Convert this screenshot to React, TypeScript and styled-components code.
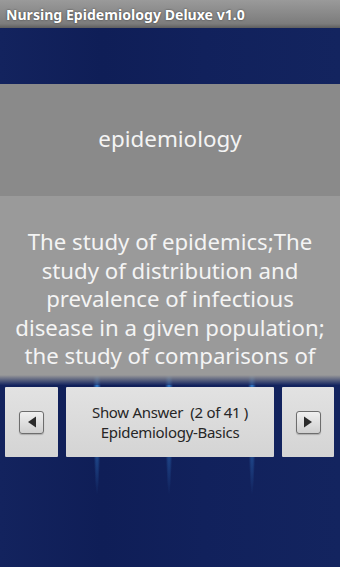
import React from "react";
import styled, { createGlobalStyle } from "styled-components";

const Global = createGlobalStyle`
  html, body { margin: 0; padding: 0; background: #11205a; }
  #root { width: 340px; height: 567px; }
`;

const Screen = styled.div`
  width: 340px;
  height: 567px;
  overflow: hidden;
  display: flex;
  flex-direction: column;
  font-family: "Noto Sans", "Open Sans", sans-serif;
  background:
    radial-gradient(ellipse 4px 100px at 97px 395px, rgba(60, 150, 235, 0.85), rgba(60, 150, 235, 0) 100%),
    radial-gradient(ellipse 4px 100px at 169px 395px, rgba(60, 150, 235, 0.8), rgba(60, 150, 235, 0) 100%),
    radial-gradient(ellipse 4px 100px at 252px 395px, rgba(60, 150, 235, 0.8), rgba(60, 150, 235, 0) 100%),
    linear-gradient(90deg, #13235e 0%, #0f1e57 30%, #11215c 60%, #13245f 100%);
`;

const TitleBar = styled.div`
  height: 28px;
  flex: none;
  box-sizing: border-box;
  padding: 0 6px;
  display: flex;
  align-items: center;
  background: linear-gradient(#9a9a9a, #7c7c7c 85%, #5e5e5e);
  color: #fff;
  font-weight: 700;
  font-size: 14.1px;
  text-shadow: 0 0 2px rgba(0, 0, 0, 0.6);
  white-space: nowrap;
`;

const Spacer = styled.div<{ $h: number }>`
  height: ${(p) => p.$h}px;
  flex: none;
`;

const TermPanel = styled.div`
  height: 112px;
  flex: none;
  background: #8a8a8a;
  display: flex;
  align-items: center;
  justify-content: center;
  color: #f4f4f4;
  font-size: 22.4px;
  padding-bottom: 4px;
  box-sizing: border-box;
`;

const DefinitionPanel = styled.div`
  height: 179px;
  flex: none;
  overflow: hidden;
  box-sizing: border-box;
  padding: 32px 6px 0;
  background: #9a9a9a;
  color: #f4f4f4;
  font-size: 22.2px;
  line-height: 28.6px;
  text-align: center;
`;

const PanelFade = styled.div`
  height: 10px;
  flex: none;
  background: linear-gradient(#9a9a9a, rgba(26, 42, 100, 0.6));
`;

const ButtonRow = styled.div`
  height: 70px;
  flex: none;
  display: flex;
  gap: 8px;
  padding: 0 6px 0 5px;
`;

const Button = styled.div<{ $w?: number }>`
  ${(p) => (p.$w ? `width: ${p.$w}px; flex: none;` : "flex: 1;")}
  background: linear-gradient(#e2e2e2, #d4d4d4);
  border-radius: 1px;
  display: flex;
  flex-direction: column;
  align-items: center;
  justify-content: center;
  color: #262626;
  font-size: 15px;
  line-height: 20px;
  letter-spacing: -0.3px;
`;

const ArrowBox = styled.div`
  width: 25px;
  height: 23px;
  box-sizing: border-box;
  border: 1.5px solid #6d6d6d;
  border-radius: 3px;
  background: linear-gradient(#f0f0f0, #cfcfcf);
  display: flex;
  align-items: center;
  justify-content: center;
  box-shadow: 0 1px 1px rgba(0, 0, 0, 0.2);
`;

const Arrow = ({ dir }: { dir: "left" | "right" }) => (
  <ArrowBox>
    <svg width="10" height="12" viewBox="0 0 10 12">
      {dir === "left" ? (
        <polygon points="9,0.5 9,11.5 1,6" fill="#2b2b2b" />
      ) : (
        <polygon points="1,0.5 1,11.5 9,6" fill="#2b2b2b" />
      )}
    </svg>
  </ArrowBox>
);

export default function App() {
  return (
    <Screen>
      <Global />
      <TitleBar>Nursing Epidemiology Deluxe v1.0</TitleBar>
      <Spacer $h={56} />
      <TermPanel>epidemiology</TermPanel>
      <DefinitionPanel>
        The study of epidemics;The study of distribution and prevalence of infectious disease in a given
        population; the study of comparisons of groups of people in order to determine the causes of
        disease
      </DefinitionPanel>
      <PanelFade />
      <Spacer $h={2} />
      <ButtonRow>
        <Button $w={53}>
          <Arrow dir="left" />
        </Button>
        <Button>
          <div>Show Answer&nbsp;&nbsp;(2 of 41 )</div>
          <div>Epidemiology-Basics</div>
        </Button>
        <Button $w={52}>
          <Arrow dir="right" />
        </Button>
      </ButtonRow>
    </Screen>
  );
}
